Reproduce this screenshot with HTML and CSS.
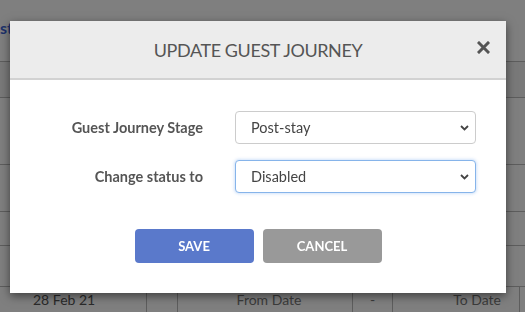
FILE: index.html
```html
<!DOCTYPE html>
<html lang="en">
<head>
    <meta charset="UTF-8">
    <meta name="viewport" content="width=device-width, initial-scale=1.0">
    <title>Update Guest Journey</title>
    <link rel="stylesheet" href="styles.css">
</head>
<body>

    <div class="page">
        <div class="page-title">st</div>
        <div class="rows">
            <div class="row row-head"></div>
            <div class="row row-a"></div>
            <div class="row row-b"></div>
            <div class="row row-c"></div>
            <div class="row row-d"></div>
            <div class="row row-last">
                <div class="cell c1">28 Feb 21</div>
                <div class="cell c2"></div>
                <div class="cell c3">From Date</div>
                <div class="cell c4">-</div>
                <div class="cell c5">To Date</div>
            </div>
        </div>
    </div>

    <div class="overlay"></div>

    <div class="modal">
        <div class="modal-header">
            <h3>UPDATE GUEST JOURNEY</h3>
            <button class="close" aria-label="Close">
                <svg width="13" height="13" viewBox="0 0 13 13">
                    <path d="M2 2 L11 11 M11 2 L2 11" stroke="#555" stroke-width="3" stroke-linecap="square"/>
                </svg>
            </button>
        </div>
        <div class="modal-body">
            <div class="form-grid">
                <label for="stage">Guest Journey Stage</label>
                <div class="select-wrap">
                    <select id="stage">
                        <option>Post-stay</option>
                        <option>Pre-stay</option>
                        <option>In-stay</option>
                    </select>
                    <svg class="chevron" width="9" height="6" viewBox="0 0 9 6">
                        <path d="M1 1 L4.5 4.5 L8 1" fill="none" stroke="#444" stroke-width="1.8"/>
                    </svg>
                </div>
                <label for="status">Change status to</label>
                <div class="select-wrap">
                    <select id="status" class="focused">
                        <option>Disabled</option>
                        <option>Enabled</option>
                    </select>
                    <svg class="chevron" width="9" height="6" viewBox="0 0 9 6">
                        <path d="M1 1 L4.5 4.5 L8 1" fill="none" stroke="#444" stroke-width="1.8"/>
                    </svg>
                </div>
            </div>
            <div class="actions">
                <button class="btn btn-save">SAVE</button>
                <button class="btn btn-cancel">CANCEL</button>
            </div>
        </div>
    </div>

</body>
</html>
```

FILE: styles.css
```css
body {
    margin: 0;
    font-family: 'Lato', 'Noto Sans', sans-serif;
    background: #fff;
    overflow: hidden;
}

.page-title {
    height: 61px;
    padding-top: 20px;
    box-sizing: border-box;
    font-size: 16px;
    font-weight: bold;
    color: #3d63d6;
    line-height: 16px;
}

.row {
    border-top: 1px solid #bbb;
    box-sizing: border-box;
}

.row-head {
    height: 36px;
    background: #f3f3f3;
}

.row-a { height: 67px; }
.row-b { height: 47px; }
.row-c { height: 34px; }
.row-d { height: 41px; }

.row-last {
    height: 40px;
    display: flex;
    width: 540px;
}

.cell {
    border-right: 1px solid #bbb;
    box-sizing: border-box;
    font-size: 14px;
    line-height: 25px;
    color: #777;
}

.c1 { width: 147px; padding-left: 33px; color: #555; }
.c2 { width: 31px; }
.c3 { width: 175px; text-align: center; padding-left: 8px; }
.c4 { width: 40px; text-align: center; }
.c5 { width: 127px; text-align: right; padding-right: 18px; }

.overlay {
    position: fixed;
    inset: 0;
    background: rgba(0, 0, 0, 0.5);
}

.modal {
    position: fixed;
    top: 21px;
    left: 10px;
    width: 496px;
    background: #fff;
    box-shadow: 0 3px 9px rgba(0, 0, 0, 0.5);
}

.modal-header {
    position: relative;
    height: 59px;
    box-sizing: border-box;
    background: #ececec;
    border-bottom: 2px solid #d2d2d2;
    display: flex;
    align-items: center;
    justify-content: center;
}

.modal-header h3 {
    margin: 0;
    font-size: 18px;
    font-weight: normal;
    color: #555;
    letter-spacing: -0.4px;
}

.close {
    position: absolute;
    right: 16px;
    top: 20px;
    border: none;
    background: none;
    padding: 0;
    width: 13px;
    height: 13px;
    cursor: pointer;
}

.close svg {
    display: block;
}

.modal-body {
    padding: 31px 30px 30px 0;
}

.form-grid {
    display: grid;
    grid-template-columns: 1fr 241px;
    column-gap: 32px;
    row-gap: 16px;
    align-items: center;
}

.form-grid label {
    text-align: right;
    font-size: 14.5px;
    font-weight: bold;
    color: #555;
}

.select-wrap {
    position: relative;
}

select {
    appearance: none;
    -webkit-appearance: none;
    width: 100%;
    height: 33px;
    border: 1px solid #ccc;
    border-radius: 4px;
    background: #fff;
    padding: 0 30px 0 15px;
    font-family: inherit;
    font-size: 14.5px;
    color: #444;
    outline: none;
    box-sizing: border-box;
}

select.focused {
    border-color: #86b4ea;
    box-shadow: 0 0 3px 1px rgba(102, 160, 235, 0.3);
}

.chevron {
    position: absolute;
    right: 7px;
    top: 14px;
}

.actions {
    display: flex;
    justify-content: center;
    gap: 9px;
    margin-top: 36px;
    padding-left: 30px;
}

.btn {
    width: 119px;
    height: 34px;
    border: none;
    border-radius: 4px;
    color: #fff;
    font-family: inherit;
    font-size: 13px;
    font-weight: bold;
    cursor: pointer;
}

.btn-save {
    background: #5a79cb;
}

.btn-cancel {
    background: #999;
}
```
